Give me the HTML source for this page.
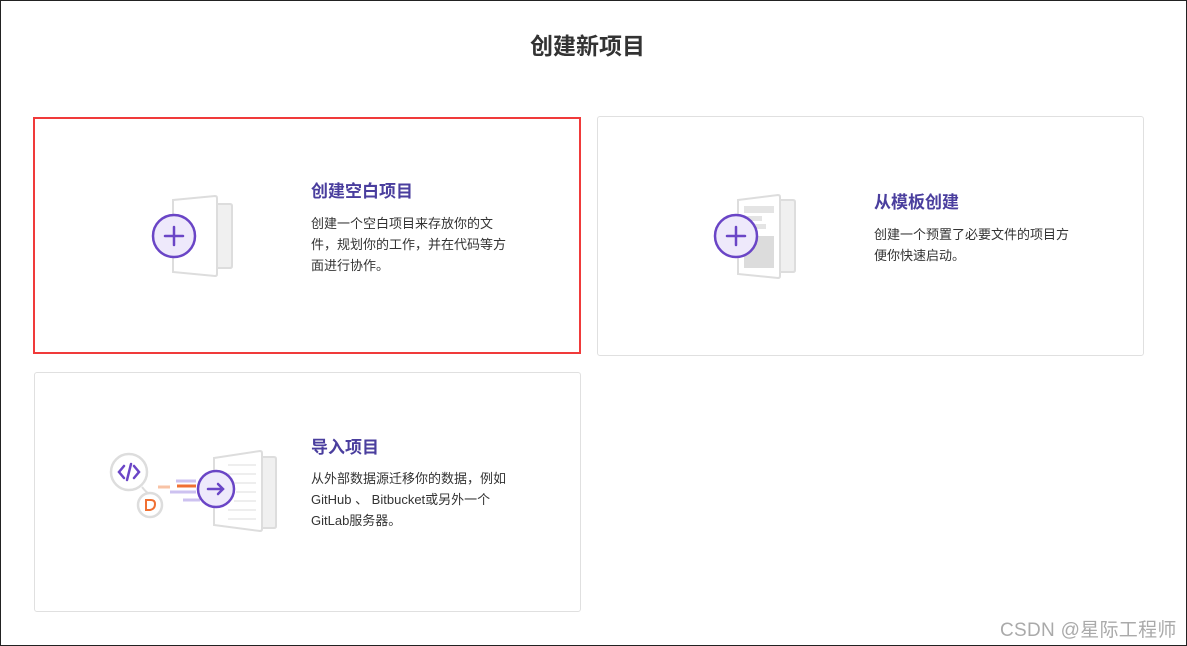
<!DOCTYPE html>
<html><head><meta charset="utf-8"><style>
*{margin:0;padding:0;box-sizing:border-box}
body{width:1187px;height:646px;background:#fff;position:relative;overflow:hidden;font-family:"Liberation Sans","Noto Sans CJK SC",sans-serif}
.frame{position:absolute;left:0;top:0;width:1187px;height:646px;border:1px solid #222}
.h{position:absolute;left:-6px;width:1187px;top:27px;text-align:center;font-size:23px;font-weight:bold;color:#333}
.card{position:absolute;border:1px solid #e0e0e0;border-radius:3px}
.t{position:absolute;font-size:17px;font-weight:bold;color:#4a3e9e;line-height:20px}
.d{position:absolute;font-size:13px;color:#333;line-height:21px}
svg{position:absolute}
.wm{position:absolute;left:1000px;top:615px;font-size:19px;color:#aaa;letter-spacing:0.3px}
</style></head><body>
<div class="frame"></div>
<div class="h">创建新项目</div>

<div class="card" style="left:33px;top:117px;width:548px;height:237px;border:2px solid #f03a3a;border-radius:0"></div>
<div class="card" style="left:597px;top:116px;width:547px;height:240px"></div>
<div class="card" style="left:34px;top:372px;width:547px;height:240px"></div>

<svg style="left:140px;top:190px" width="100" height="90" viewBox="0 0 100 90">
<path d="M77 14 L90 14 Q92 14 92 16 L92 76 Q92 78 90 78 L77 78 Z" fill="#f0f0f0" stroke="#ddd" stroke-width="2"/>
<path d="M33 10 L75 6 Q77 6 77 8 L77 84 Q77 86 75 86 L33 82 Z" fill="#fff" stroke="#ddd" stroke-width="2"/>
<circle cx="34" cy="46" r="21" fill="#eee9fb" stroke="#6a45c6" stroke-width="2.5"/>
<path d="M34 37 V55 M25 46 H43" stroke="#6a45c6" stroke-width="2.5" stroke-linecap="round"/>
</svg>
<div class="t" style="left:311px;top:182px">创建空白项目</div>
<div class="d" style="left:311px;top:213px">创建一个空白项目来存放你的文<br>件，规划你的工作，并在代码等方<br>面进行协作。</div>

<svg style="left:700px;top:190px" width="110" height="90" viewBox="0 0 110 90">
<path d="M80 10 L93 10 Q95 10 95 12 L95 80 Q95 82 93 82 L80 82 Z" fill="#f0f0f0" stroke="#ddd" stroke-width="2"/>
<path d="M38 10 L78 5 Q80 5 80 7 L80 86 Q80 88 78 88 L38 84 Z" fill="#fff" stroke="#ddd" stroke-width="2"/>
<rect x="44" y="16" width="30" height="7" fill="#e4e4e4"/>
<rect x="44" y="26" width="18" height="5" fill="#e4e4e4"/>
<rect x="44" y="34" width="22" height="5" fill="#e4e4e4"/>
<rect x="44" y="46" width="30" height="32" fill="#dcdcdc"/>
<circle cx="36" cy="46" r="21" fill="#eee9fb" stroke="#6a45c6" stroke-width="2.5"/>
<path d="M36 37 V55 M27 46 H45" stroke="#6a45c6" stroke-width="2.5" stroke-linecap="round"/>
</svg>
<div class="t" style="left:874px;top:193px">从模板创建</div>
<div class="d" style="left:874px;top:224px">创建一个预置了必要文件的项目方<br>便你快速启动。</div>

<svg style="left:100px;top:440px" width="190" height="100" viewBox="100 440 190 100">
<path d="M262 457 L274 457 Q276 457 276 459 L276 526 Q276 528 274 528 L262 528 Z" fill="#f0f0f0" stroke="#ddd" stroke-width="2"/>
<path d="M214 458 L260 451 Q262 451 262 453 L262 529 Q262 531 260 531 L214 525 Z" fill="#fff" stroke="#ddd" stroke-width="2"/>
<path d="M228 465 H256 M228 474 H256 M234 483 H256 M236 492 H256 M234 501 H256 M228 510 H256 M228 519 H256" stroke="#e8e8e8" stroke-width="1.5"/>
<path d="M142 487 Q146 492 148 493" stroke="#ddd" stroke-width="2" fill="none"/>
<circle cx="129" cy="472" r="18" fill="#fff" stroke="#ddd" stroke-width="2.5"/>
<path d="M124 466 L119 472 L124 478 M134 466 L139 472 L134 478 M131 464 L127 480" stroke="#6a45c6" stroke-width="2.5" fill="none" stroke-linecap="round"/>
<circle cx="150" cy="505" r="12" fill="#fff" stroke="#ddd" stroke-width="2.5"/>
<path d="M146 500 H151 Q155 500 155 504 Q155 509 150 510 H146 Z" stroke="#f07033" stroke-width="2" fill="none"/>
<path d="M158 487 H170" stroke="#f8c3a6" stroke-width="3"/>
<path d="M176 481 H196" stroke="#cdc2f0" stroke-width="3"/>
<path d="M177 486 H196" stroke="#f07033" stroke-width="3"/>
<path d="M170 492 H196" stroke="#cdc2f0" stroke-width="3"/>
<path d="M183 500 H200" stroke="#cdc2f0" stroke-width="3"/>
<circle cx="216" cy="489" r="18" fill="#eee9fb" stroke="#6a45c6" stroke-width="2.5"/>
<path d="M208 489 H223 M218 484 L223 489 L218 494" stroke="#6a45c6" stroke-width="2.5" fill="none" stroke-linecap="round"/>
</svg>
<div class="t" style="left:311px;top:438px">导入项目</div>
<div class="d" style="left:311px;top:468px">从外部数据源迁移你的数据，例如<br>GitHub 、 Bitbucket或另外一个<br>GitLab服务器。</div>

<div class="wm">CSDN @星际工程师</div>
</body></html>
